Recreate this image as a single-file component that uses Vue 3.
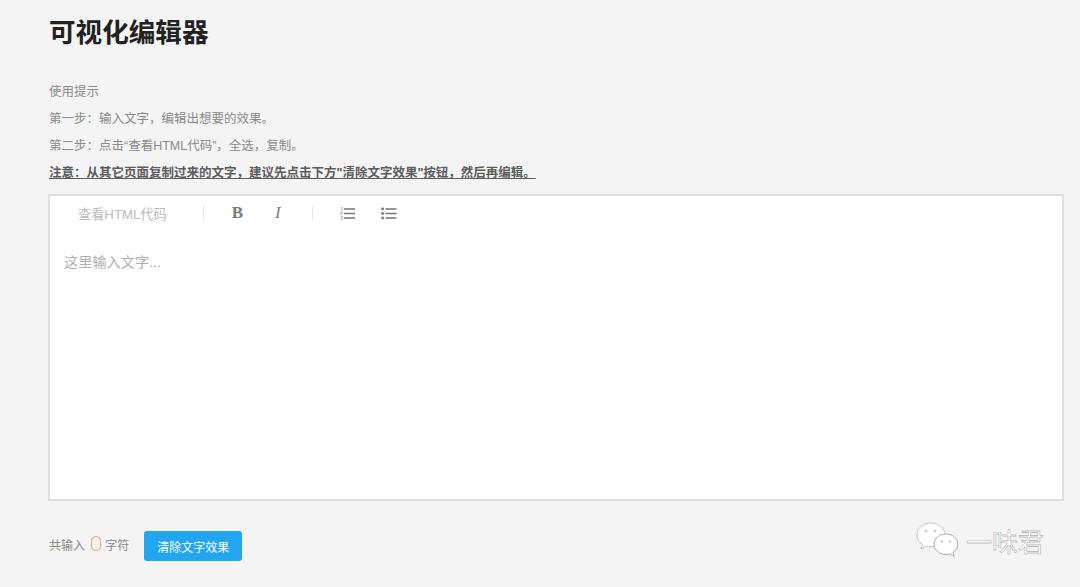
<script setup>
const tips = [
  '使用提示',
  '第一步：输入文字，编辑出想要的效果。',
  '第二步：点击“查看HTML代码”，全选，复制。',
]
</script>

<template>
  <div class="page">
    <h1 class="title">可视化编辑器</h1>
    <div class="tips">
      <p v-for="t in tips" :key="t" class="tip">{{ t }}</p>
      <p class="tip warn">注意：从其它页面复制过来的文字，建议先点击下方"清除文字效果"按钮，然后再编辑。</p>
    </div>
    <div class="editor">
      <div class="toolbar">
        <span class="html-btn">查看HTML代码</span>
        <span class="sep"></span>
        <span class="fmt bold">B</span>
        <span class="fmt italic">I</span>
        <span class="sep sep2"></span>
        <svg class="list" width="16" height="13" viewBox="0 0 16 13" fill="none">
          <path d="M4 2h11M4 6.500h11M4 11h11" stroke="#777" stroke-width="1.300" />
          <path d="M1 0.500h1v3.500M0.500 5.200h1.700v1.400H0.700v1.300M0.600 9.300h1.700v3H0.600" stroke="#999" stroke-width="0.800" />
        </svg>
        <svg class="list list2" width="16" height="13" viewBox="0 0 16 13" fill="none">
          <path d="M4.500 2h11M4.500 6.500h11M4.500 11h11" stroke="#777" stroke-width="1.300" />
          <circle cx="1.600" cy="2" r="1.400" fill="#777" />
          <circle cx="1.600" cy="6.500" r="1.400" fill="#777" />
          <circle cx="1.600" cy="11" r="1.400" fill="#777" />
        </svg>
      </div>
      <div class="placeholder">这里输入文字...</div>
    </div>
    <div class="footer">
      <span class="count-label">共输入</span>
      <span class="count">0</span>
      <span class="count-label">字符</span>
      <button class="clear">清除文字效果</button>
    </div>
    <div class="mark">
      <svg width="46" height="42" viewBox="0 0 46 42">
        <path d="M16 4C8 4 2 9.500 2 16c0 3.800 2 7 5.500 9.200L6 30l5.400-2.800c1.500.4 3 .6 4.600.6 8 0 14-5.300 14-11.800S24 4 16 4z" fill="#fff" stroke="#c4c4c4" stroke-width="1" />
        <path d="M31 15c-6.800 0-12 4.500-12 10.200S24.200 35.500 31 35.500c1.300 0 2.600-.2 3.800-.6l4.400 2.500-1.200-4c2.800-1.900 4.700-4.700 4.700-8.200C42.700 19.500 37.800 15 31 15z" fill="#fff" stroke="#aaa" stroke-width="1" />
        <circle cx="11" cy="12" r="1.500" fill="#d0d0d0" />
        <circle cx="20" cy="12" r="1.500" fill="#d0d0d0" />
        <circle cx="27" cy="22.500" r="1.200" fill="#c8c8c8" />
        <circle cx="35" cy="22.500" r="1.200" fill="#c8c8c8" />
      </svg>
      <span class="mark-text">一味君</span>
    </div>
  </div>
</template>

<style>
html, body { margin: 0; background: #f4f4f4; }
</style>

<style scoped>
.page {
  position: relative;
  width: 1080px;
  height: 587px;
  box-sizing: border-box;
  padding: 15px 16px 0 48px;
  background: #f4f4f4;
  font-family: "Liberation Sans", "Noto Sans CJK SC", sans-serif;
  overflow: hidden;
}
.title {
  margin: 0 0 0 1px;
  font-size: 26.6px;
  line-height: 36px;
  font-weight: 700;
  color: #222;
}
.tips { margin: 28px 0 0 1px; }
.tip {
  margin: 0;
  font-size: 12.5px;
  line-height: 27px;
  color: #8a8a8a;
}
.warn {
  font-weight: 700;
  color: #5c5c5c;
  text-decoration: underline;
}
.editor {
  margin-top: 7px;
  height: 307px;
  box-sizing: border-box;
  border: 2px solid #dedede;
  background: #fff;
}
.toolbar {
  display: flex;
  align-items: center;
  height: 34px;
  color: #b4b4b4;
}
.html-btn {
  margin-left: 28px;
  font-size: 13.200px;
  color: #bcbcbc;
}
.sep {
  width: 1px;
  height: 16px;
  margin-left: 36px;
  background: #e6e6e6;
}
.fmt {
  font-family: "Liberation Serif", serif;
  font-size: 17px;
  color: #7c7c7c;
}
.bold { margin-left: 28px; font-weight: 700; }
.italic { margin-left: 32px; font-style: italic; }
.sep2 { margin-left: 31px; }
.list { margin-left: 27px; }
.list2 { margin-left: 25px; }
.placeholder {
  margin: 22px 0 0 14px;
  font-size: 14.200px;
  line-height: 20px;
  color: #b0b0b0;
}
.footer {
  display: flex;
  align-items: center;
  height: 30px;
  margin: 30px 0 0 1px;
}
.count-label {
  font-size: 12px;
  color: #8a8a8a;
  margin-bottom: 3px;
}
.count {
  margin: 0 3px 6px 5px;
  font-family: "Lato", sans-serif;
  font-size: 21px;
  line-height: 22px;
  color: #f0a878;
  font-weight: 300;
}
.clear {
  margin-left: 15px;
  width: 98px;
  height: 30px;
  border: 0;
  border-radius: 3px;
  padding: 0;
  background: #23a6f0;
  color: #fff;
  font: inherit;
  font-size: 12px;
}
.mark {
  position: absolute;
  left: 915px;
  top: 519px;
  display: flex;
  align-items: center;
}
.mark-text {
  margin-left: 5px;
  font-size: 26px;
  color: #fff;
  -webkit-text-stroke: 0.4px #888;
}
</style>
